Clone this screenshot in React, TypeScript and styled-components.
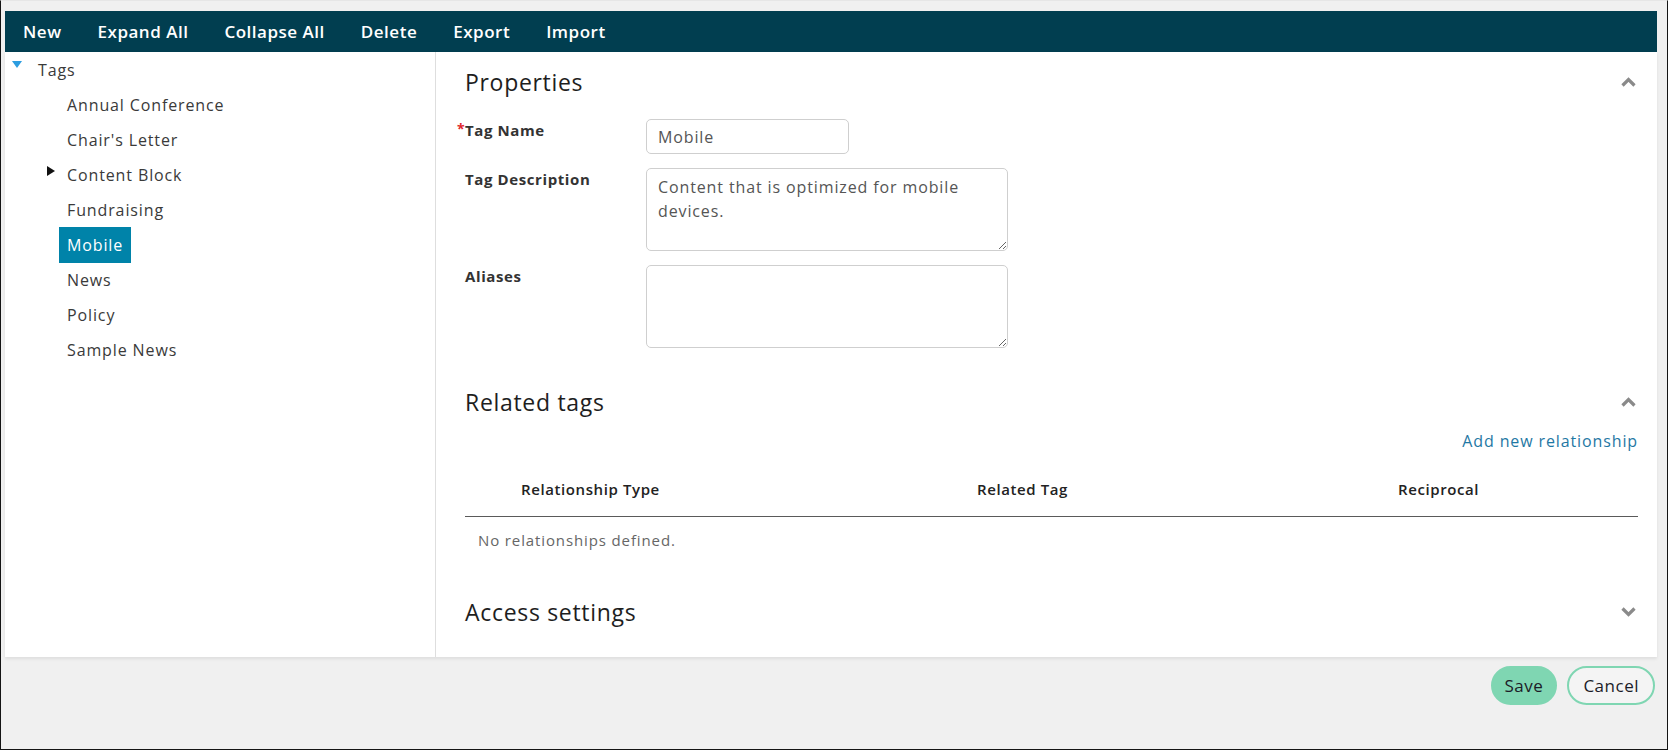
import React from 'react';
import styled, { createGlobalStyle } from 'styled-components';

const GlobalStyle = createGlobalStyle`
    html, body {
        margin: 0;
        padding: 0;
        background: #f0f0f0;
    }
    body {
        font-family: 'Open Sans', 'Liberation Sans', sans-serif;
        letter-spacing: 0.055em;
        color: #333;
    }
    input, textarea, button {
        font-family: inherit;
        letter-spacing: inherit;
    }
    * {
        box-sizing: border-box;
    }
`;

const Frame = styled.div`
    width: 1668px;
    height: 750px;
    border: 1px solid #141414;
    border-top-color: #e6e6e6;
    padding: 10px 10px 0 4px;
    background: #f0f0f0;
    display: flex;
    flex-direction: column;
`;

const Toolbar = styled.div`
    display: flex;
    align-items: center;
    height: 41px;
    background: #013e50;
`;

const ToolButton = styled.button`
    background: none;
    border: none;
    padding: 0 18px;
    height: 100%;
    color: #fff;
    font-size: 17px;
    font-weight: 600;
    letter-spacing: 0.03em;
    cursor: pointer;
`;

const Workspace = styled.div`
    display: flex;
    height: 605px;
    background: #fff;
    box-shadow: 0 2px 3px rgba(0, 0, 0, 0.08);
`;

const TreePanel = styled.div`
    width: 431px;
    flex-shrink: 0;
    border-right: 1px solid #dedede;
`;

const TreeRow = styled.div<{ depth: number }>`
    display: flex;
    align-items: center;
    height: 35px;
    padding-left: ${(props) => (props.depth === 0 ? 7 : 37)}px;
`;

const ToggleSlot = styled.span<{ depth: number }>`
    display: flex;
    align-items: center;
    width: ${(props) => (props.depth === 0 ? 18 : 17)}px;
    height: 100%;
`;

const DownCaret = styled.span`
    width: 0;
    height: 0;
    border-left: 5px solid transparent;
    border-right: 5px solid transparent;
    border-top: 7px solid #2c9de0;
    margin-top: -11px;
`;

const RightCaret = styled.span`
    width: 0;
    height: 0;
    border-top: 5px solid transparent;
    border-bottom: 5px solid transparent;
    border-left: 8px solid #111;
    margin-top: -8px;
    margin-left: 5px;
`;

const TreeLabel = styled.span<{ selected?: boolean }>`
    display: inline-block;
    height: 36px;
    line-height: 36px;
    padding: 0 8px;
    font-size: 16px;
    color: ${(props) => (props.selected ? '#fff' : '#3a3a3a')};
    background: ${(props) => (props.selected ? '#0083a9' : 'transparent')};
`;

const Content = styled.div`
    flex: 1;
    padding: 10px 19px 0 29px;
`;

const SectionHeader = styled.div<{ gap?: number }>`
    display: flex;
    align-items: center;
    justify-content: space-between;
    height: 40px;
    margin-top: ${(props) => props.gap || 0}px;
`;

const SectionTitle = styled.h2`
    margin: 0;
    font-size: 23px;
    font-weight: 500;
    letter-spacing: 0.03em;
    color: #1e1e1e;
`;

const Chevron = styled.svg`
    width: 15px;
    height: 10px;
    margin-right: 2px;
`;

const Form = styled.div`
    display: flex;
    flex-direction: column;
    gap: 14px;
    margin-top: 17px;
`;

const FieldRow = styled.div`
    display: flex;
    align-items: flex-start;
`;

const FieldLabel = styled.label<{ required?: boolean }>`
    position: relative;
    width: 181px;
    flex-shrink: 0;
    font-size: 15px;
    line-height: 22px;
    font-weight: 700;
    letter-spacing: 0.04em;
    color: #333;

    ${(props) =>
        props.required &&
        `
        &::before {
            content: '*';
            position: absolute;
            left: -8px;
            top: -1px;
            color: #e0262b;
            font-size: 14px;
        }
    `}
`;

const TextInput = styled.input`
    width: 203px;
    height: 35px;
    padding: 0 11px;
    border: 1px solid #cfcfcf;
    border-radius: 5px;
    font-size: 16px;
    color: #555;
    outline: none;
`;

const TextArea = styled.textarea`
    width: 362px;
    height: 83px;
    padding: 6px 11px;
    border: 1px solid #cfcfcf;
    border-radius: 5px;
    font-size: 16px;
    line-height: 24px;
    color: #555;
    outline: none;
`;

const LinkRow = styled.div`
    display: flex;
    justify-content: flex-end;
    margin-top: 8px;
`;

const AddLink = styled.a`
    font-size: 16px;
    line-height: 22px;
    color: #1f78a4;
    text-decoration: none;
    cursor: pointer;
`;

const TableGrid = styled.div`
    display: grid;
    grid-template-columns: 56px 456px 421px 1fr;
`;

const HeaderCell = styled.div`
    padding: 26px 0 16px;
    line-height: 22px;
    font-size: 15px;
    font-weight: 600;
    letter-spacing: 0.04em;
    color: #222;
    border-bottom: 1px solid #5a5a5a;
`;

const EmptyCell = styled.div`
    grid-column: 1 / -1;
    padding: 12px 13px 0;
    line-height: 22px;
    font-size: 15px;
    color: #666;
`;

const Footer = styled.div`
    display: flex;
    justify-content: flex-end;
    gap: 10px;
    padding: 9px 2px 0 0;
`;

const PillButton = styled.button<{ primary?: boolean }>`
    height: 39px;
    padding: 0 ${(props) => (props.primary ? 12 : 14)}px;
    border-radius: 20px;
    border: 2px solid #7fd6b2;
    background: ${(props) => (props.primary ? '#7fd6b2' : '#f4f4f4')};
    font-size: 17px;
    letter-spacing: 0.03em;
    color: #1c1c28;
    cursor: pointer;
`;

function ChevronIcon({ up }: { up: boolean }) {
    return (
        <Chevron viewBox="0 0 15 10">
            <polyline
                points={up ? '1.5,8.5 7.5,2.5 13.5,8.5' : '1.5,1.5 7.5,7.5 13.5,1.5'}
                fill="none"
                stroke="#8a8a8a"
                strokeWidth="3.2"
            />
        </Chevron>
    );
}

const tags = [
    { name: 'Annual Conference' },
    { name: "Chair's Letter" },
    { name: 'Content Block', collapsed: true },
    { name: 'Fundraising' },
    { name: 'Mobile', selected: true },
    { name: 'News' },
    { name: 'Policy' },
    { name: 'Sample News' },
];

const toolbarItems = ['New', 'Expand All', 'Collapse All', 'Delete', 'Export', 'Import'];

export default function App() {
    return (
        <>
            <GlobalStyle />
            <Frame>
                <Toolbar>
                    {toolbarItems.map((item) => (
                        <ToolButton key={item}>{item}</ToolButton>
                    ))}
                </Toolbar>
                <Workspace>
                    <TreePanel>
                        <TreeRow depth={0}>
                            <ToggleSlot depth={0}>
                                <DownCaret />
                            </ToggleSlot>
                            <TreeLabel>Tags</TreeLabel>
                        </TreeRow>
                        {tags.map((tag) => (
                            <TreeRow depth={1} key={tag.name}>
                                <ToggleSlot depth={1}>{tag.collapsed && <RightCaret />}</ToggleSlot>
                                <TreeLabel selected={tag.selected}>{tag.name}</TreeLabel>
                            </TreeRow>
                        ))}
                    </TreePanel>
                    <Content>
                        <SectionHeader>
                            <SectionTitle>Properties</SectionTitle>
                            <ChevronIcon up />
                        </SectionHeader>
                        <Form>
                            <FieldRow>
                                <FieldLabel required>Tag Name</FieldLabel>
                                <TextInput defaultValue="Mobile" />
                            </FieldRow>
                            <FieldRow>
                                <FieldLabel>Tag Description</FieldLabel>
                                <TextArea defaultValue="Content that is optimized for mobile devices." />
                            </FieldRow>
                            <FieldRow>
                                <FieldLabel>Aliases</FieldLabel>
                                <TextArea />
                            </FieldRow>
                        </Form>
                        <SectionHeader gap={34}>
                            <SectionTitle>Related tags</SectionTitle>
                            <ChevronIcon up />
                        </SectionHeader>
                        <LinkRow>
                            <AddLink>Add new relationship</AddLink>
                        </LinkRow>
                        <TableGrid>
                            <HeaderCell />
                            <HeaderCell>Relationship Type</HeaderCell>
                            <HeaderCell>Related Tag</HeaderCell>
                            <HeaderCell>Reciprocal</HeaderCell>
                            <EmptyCell>No relationships defined.</EmptyCell>
                        </TableGrid>
                        <SectionHeader gap={41}>
                            <SectionTitle>Access settings</SectionTitle>
                            <ChevronIcon up={false} />
                        </SectionHeader>
                    </Content>
                </Workspace>
                <Footer>
                    <PillButton primary>Save</PillButton>
                    <PillButton>Cancel</PillButton>
                </Footer>
            </Frame>
        </>
    );
}
